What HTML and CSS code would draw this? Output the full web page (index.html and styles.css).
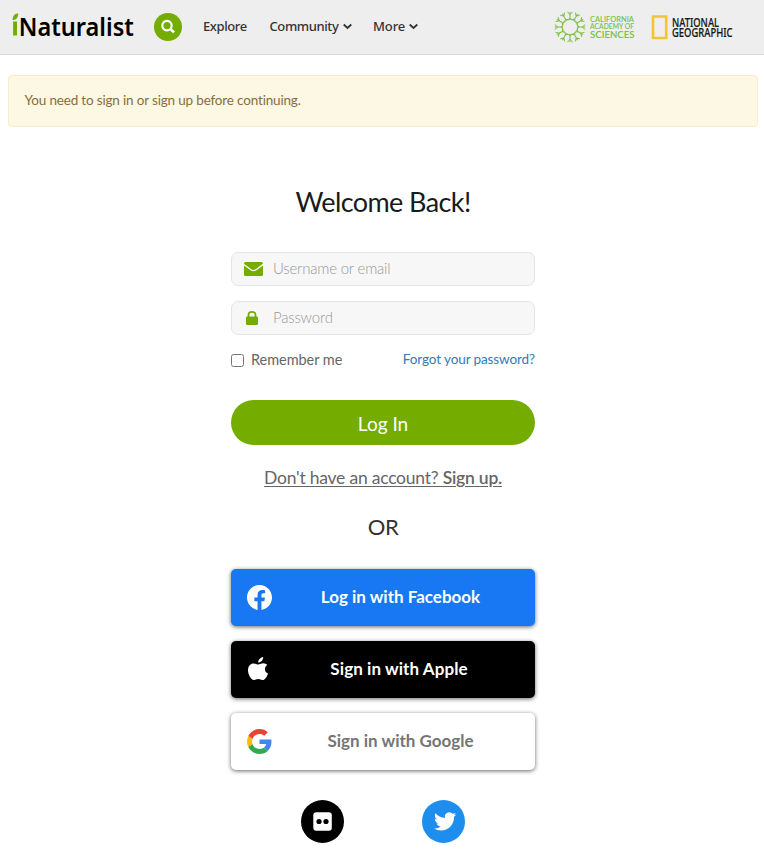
FILE: index.html
```
<!DOCTYPE html>
<html lang="en">
<head>
<meta charset="utf-8">
<title>iNaturalist</title>
<link rel="stylesheet" href="styles.css">
</head>
<body>
<header class="nav">
  <a class="logo"><svg width="124" height="40" viewBox="0 -5 124 40">
    <path d="M2.1 9.500H6V23.500H2.1zM1.700 8C1.700 3.500 3.800 1.500 7.300 1.500C7.100 6.200 5 7.900 1.700 8z" fill="#74ac00"/>
    <text class="logo-text" x="7.8" y="23.500" textLength="115" lengthAdjust="spacingAndGlyphs">Naturalist</text>
  </svg></a>
  <a class="search"><svg width="28" height="28" viewBox="0 0 28 28" fill="none" stroke="#fff"><circle cx="13" cy="12.6" r="4.7" stroke-width="2.200"/><path d="M16.3 15.9L20 19.4" stroke-width="2.6"/></svg></a>
  <nav class="menu">
    <a class="explore">Explore</a>
    <a class="community">Community<svg width="9" height="7" viewBox="0 0 9 7"><path d="M.7 1.500L4.500 5L8.300 1.500" fill="none" stroke="currentColor" stroke-width="1.800"/></svg></a>
    <a class="more">More<svg width="9" height="7" viewBox="0 0 9 7"><path d="M.7 1.500L4.500 5L8.300 1.500" fill="none" stroke="currentColor" stroke-width="1.800"/></svg></a>
  </nav>
  <div class="partners">
    <svg width="82" height="34" viewBox="0 0 82 34">
      <defs><g id="branch"><path d="M-1.9-7.3L0-9L1.9-7.3M0-9V-12.4M-2.5-15.2L0-12.2L2.5-15.2M0-12V-15.3"/></g></defs>
      <g transform="translate(16 17)" fill="none" stroke="#7ac143" stroke-width="1">
        <circle r="7.6" stroke-width=".8"/>
        <use href="#branch"/><use href="#branch" transform="rotate(30)"/><use href="#branch" transform="rotate(60)"/><use href="#branch" transform="rotate(90)"/><use href="#branch" transform="rotate(120)"/><use href="#branch" transform="rotate(150)"/><use href="#branch" transform="rotate(180)"/><use href="#branch" transform="rotate(210)"/><use href="#branch" transform="rotate(240)"/><use href="#branch" transform="rotate(270)"/><use href="#branch" transform="rotate(300)"/><use href="#branch" transform="rotate(330)"/>
      </g>
      <g class="academy"><text x="36" y="11.5" font-size="7.8" textLength="44" lengthAdjust="spacingAndGlyphs">CALIFORNIA</text><text x="36" y="19.2" font-size="7.4" textLength="44" lengthAdjust="spacingAndGlyphs">ACADEMY OF</text><text x="36" y="28.3" font-size="10.3" textLength="44.500" lengthAdjust="spacingAndGlyphs">SCIENCES</text></g>
    </svg>
    <svg width="83" height="36" viewBox="0 -5 83 36">
      <path d="M2 2.500H15.200V24H2z" fill="none" stroke="#f5c432" stroke-width="2.6"/>
      <g class="natgeo"><text x="21" y="12.500" textLength="47" lengthAdjust="spacingAndGlyphs">NATIONAL</text><text x="21" y="23" textLength="60.500" lengthAdjust="spacingAndGlyphs">GEOGRAPHIC</text></g>
    </svg>
  </div>
</header>
<div class="alert"><span>You need to sign in or sign up before continuing.</span></div>
<main class="login">
  <h1><span>Welcome Back!</span></h1>
  <div class="field"><svg width="20" height="16" viewBox="0 0 20 16"><path d="M1.500 1H17.500Q19 1 19 2.500L12 8Q9.500 9.800 7 8L0 2.700Q0 1 1.500 1zM0 4.500L6.500 9.200Q9.500 11.300 12.500 9.200L19 4.500V13.500Q19 15 17.500 15H1.500Q0 15 0 13.500z" fill="#74ac00"/></svg><input type="text" placeholder="Username or email"></div>
  <div class="field"><svg width="20" height="16" viewBox="0 0 20 16"><path d="M4.500 7V5Q4.500 1.800 8 1.800Q11.500 1.800 11.500 5V7" fill="none" stroke="#74ac00" stroke-width="1.800"/><rect x="2" y="6.500" width="12" height="8.500" rx="1" fill="#74ac00"/></svg><input type="password" placeholder="Password"></div>
  <div class="options"><label><input type="checkbox"><span class="remember">Remember me</span></label><a class="forgot">Forgot your password?</a></div>
  <button class="submit"><span>Log In</span></button>
  <p class="signup"><a>Don't have an account? <b>Sign up.</b></a></p>
  <p class="or">OR</p>
  <a class="provider facebook"><svg width="25" height="25" viewBox="0 0 24 24"><path fill="#fff" d="M24 12.073c0-6.627-5.373-12-12-12s-12 5.373-12 12c0 5.99 4.388 10.954 10.125 11.854v-8.385H7.078v-3.470h3.047V9.430c0-3.007 1.792-4.669 4.533-4.669 1.312 0 2.686.235 2.686.235v2.953H15.830c-1.491 0-1.956.925-1.956 1.874v2.250h3.328l-.532 3.470h-2.796v8.385C19.612 23.027 24 18.062 24 12.073z"/></svg><span class="label"><span>Log in with Facebook</span></span></a>
  <a class="provider apple"><svg width="25" height="25" viewBox="0 0 25 25"><path fill="#fff" d="M16.200 0C16.400 3 14 5.600 11.300 5.600C11 2.900 13.400.4 16.200 0zM20.300 8.100C16.800 10.400 17.300 14.900 21 16.400C20 19.400 18 23 15.600 23C13.900 23 13.200 22 11.200 22C9.200 22 8.400 23 6.900 23C4 23 1 17.600 1 13.100C1 8.700 3.700 6.400 6.600 6.400C8.500 6.400 9.800 7.500 11 7.500C12.300 7.500 14 6.200 16.300 6.200C17.800 6.200 19.400 6.900 20.300 8.100z"/></svg><span class="label"><span>Sign in with Apple</span></span></a>
  <a class="provider google"><svg width="25" height="25" viewBox="0 0 48 48"><path fill="#EA4335" d="M24 9.500c3.540 0 6.710 1.220 9.210 3.600l6.850-6.850C35.900 2.380 30.470 0 24 0 14.620 0 6.510 5.380 2.560 13.220l7.980 6.190C12.430 13.720 17.740 9.500 24 9.500z"/><path fill="#4285F4" d="M46.980 24.550c0-1.570-.15-3.090-.38-4.550H24v9.020h12.940c-.58 2.960-2.260 5.480-4.780 7.180l7.730 6c4.510-4.180 7.090-10.360 7.090-17.650z"/><path fill="#FBBC05" d="M10.530 28.590c-.48-1.450-.76-2.990-.76-4.590s.27-3.140.76-4.590l-7.980-6.190C.92 16.460 0 20.120 0 24c0 3.880.92 7.540 2.560 10.780l7.970-6.190z"/><path fill="#34A853" d="M24 48c6.480 0 11.930-2.130 15.890-5.810l-7.730-6c-2.150 1.450-4.920 2.300-8.160 2.300-6.260 0-11.570-4.220-13.470-9.910l-7.980 6.190C6.510 42.620 14.620 48 24 48z"/></svg><span class="label"><span>Sign in with Google</span></span></a>
  <div class="socials">
    <svg width="43" height="43" viewBox="0 0 43 43"><circle cx="21.500" cy="21.500" r="21.500"/><rect x="12.300" y="12.300" width="18.500" height="18.500" rx="3" fill="#fff"/><circle cx="18" cy="21.500" r="2.600"/><circle cx="25" cy="21.500" r="2.600"/></svg>
    <svg width="43" height="43" viewBox="0 0 43 43"><circle cx="21.500" cy="21.500" r="21.500" fill="#1d8eee"/><path transform="translate(12 10.200) scale(.93)" fill="#fff" d="M23.953 4.570a10 10 0 01-2.825.775 4.958 4.958 0 002.163-2.723c-.951.555-2.005.959-3.127 1.184a4.920 4.920 0 00-8.384 4.482C7.690 8.095 4.067 6.130 1.640 3.162a4.822 4.822 0 00-.666 2.475c0 1.710.870 3.213 2.188 4.096a4.904 4.904 0 01-2.228-.616v.060a4.923 4.923 0 003.946 4.827 4.996 4.996 0 01-2.212.085 4.936 4.936 0 004.604 3.417 9.867 9.867 0 01-6.102 2.105c-.390 0-.779-.023-1.170-.067a13.995 13.995 0 007.557 2.209c9.053 0 13.998-7.496 13.998-13.985 0-.210 0-.420-.015-.630A9.935 9.935 0 0024 4.590z"/></svg>
  </div>
</main>
</body>
</html>
```
FILE: styles.css
```
* { box-sizing: border-box; }
body { margin: 0; font-family: Lato, "Liberation Sans", sans-serif; font-size: 14px; color: #333; background: #fff; overflow: hidden; }
svg { display: block; flex: none; overflow: visible; }
.nav { height: 55px; background: #eee; border-bottom: 1px solid #d9d9d9; display: flex; align-items: center; padding: 0 30px 0 11px; }
.logo-text { font: 600 26px "Noto Sans", sans-serif; }
.search { margin-left: 19px; width: 28px; height: 28px; border-radius: 50%; background: #74ac00; }
.menu { display: flex; margin-left: 21px; gap: 22px; padding-bottom: 2px; line-height: 20px; font-family: "Noto Sans", sans-serif; font-weight: 500; font-size: 13px; }
.menu a { display: flex; align-items: center; white-space: nowrap; }
.explore { width: 45px; letter-spacing: -.4px; }
.community { width: 82px; letter-spacing: -.4px; margin-left: -.5px; }
.more { width: 45px; letter-spacing: -.1px; margin-left: -.5px; }
.menu svg { margin-left: auto; }
.partners { display: flex; align-items: center; gap: 15px; margin-left: auto; }
.academy { font-family: Lato, sans-serif; font-weight: 600; fill: #7ac143; }
.natgeo { font: 500 12.5px "Noto Sans", sans-serif; fill: #151515; stroke: #151515; stroke-width: .2px; }
.alert { margin: 20px 6px 0 8px; height: 52px; padding: 0 15.5px; border: 1px solid #faebcc; border-radius: 4px; background: #fcf8e3; color: #8a6d3b; line-height: 48px; font-size: 13.5px; letter-spacing: -.17px; }
.login { width: 304px; margin: 57px auto 0 231px; }
h1 { margin: 0 0 32px; font-size: 27px; line-height: 36px; font-weight: 400; text-align: center; color: #1a1a1a; letter-spacing: -.6px; }
.field { height: 34px; margin-bottom: 15px; border: 1px solid #e5e5e5; border-radius: 7px; background: #f7f7f7; display: flex; align-items: center; padding-left: 12px; }
.field input { border: 0; outline: 0; background: transparent; margin-left: 9px; padding: 0 0 3px; width: 240px; font: 300 15px Lato, sans-serif; letter-spacing: -.2px; }
.field input::placeholder { color: #999; opacity: 1; }
.options { display: flex; justify-content: space-between; align-items: center; height: 20px; margin-top: -1px; color: #666; }
.options label { display: flex; align-items: center; }
.options input { margin: 2px 7px 0 0; width: 13px; height: 13px; }
.remember { font-size: 14.5px; letter-spacing: -.05px; }
.forgot { color: #337ab7; font-size: 13.5px; letter-spacing: -.1px; }
.submit { display: block; width: 304px; height: 45px; margin-top: 31px; border: 0; border-radius: 23px; background: #74ac00; color: #fff; font: 400 19px Lato, sans-serif; padding: 1px 0 0; }
.signup { margin: 20px 0 0; text-align: center; line-height: 26px; font-size: 17.5px; letter-spacing: -.22px; color: #666; }
.signup a { text-decoration: underline; text-underline-offset: 2px; }
.signup b { font-weight: 600; }
.or { margin: 21px 0 27px; font-size: 22px; line-height: 30px; text-align: center; letter-spacing: -.4px; }
.provider { display: flex; align-items: center; height: 57px; margin-bottom: 15px; padding-left: 16px; border-radius: 5px; box-shadow: 0 1px 4px rgba(0,0,0,.6); font-size: 17px; font-weight: 700; }
.label { flex: 1; text-align: center; padding: 0 6px 2px 0; }
.facebook { background: #1877f2; color: #fff; }
.apple { background: #000; color: #fff; }
.apple .label { padding-right: 9px; letter-spacing: .08px; }
.google { background: #fff; color: #757575; }
.socials { display: flex; gap: 78px; margin: 30px 0 0 70px; }
```
